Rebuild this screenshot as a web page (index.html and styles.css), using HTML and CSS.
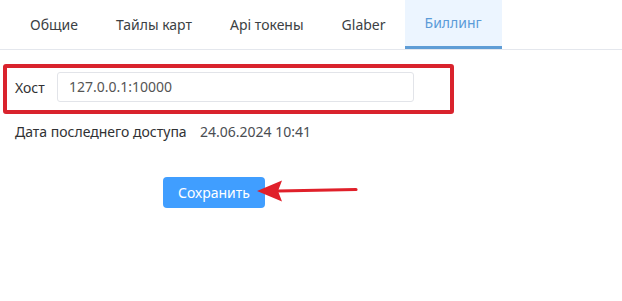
FILE: index.html
```html
<!DOCTYPE html>
<html>
<head>
<meta charset="utf-8">
<link rel="stylesheet" href="styles.css">
</head>
<body>
<div class="page">
  <nav class="tabs">
    <div class="tab">Общие</div>
    <div class="tab">Тайлы карт</div>
    <div class="tab">Api токены</div>
    <div class="tab">Glaber</div>
    <div class="tab active">Биллинг</div>
  </nav>
  <div class="form">
    <div class="row host">
      <label class="label">Хост</label>
      <div class="input">127.0.0.1:10000</div>
      <div class="highlight"></div>
    </div>
    <div class="row info">
      <span class="label">Дата последнего доступа</span>
      <span class="value">24.06.2024 10:41</span>
    </div>
    <div class="actions">
      <button class="btn">Сохранить</button>
      <svg class="arrow" width="104" height="26" viewBox="0 0 104 26">
        <line x1="22" y1="13" x2="100" y2="11.5" stroke="#e0202a" stroke-width="3.2" stroke-linecap="round"/>
        <polygon points="1,13 26,2.5 22,13 26,23.5" fill="#e0202a"/>
      </svg>
    </div>
  </div>
</div>
</body>
</html>
```
FILE: styles.css
```css
* { box-sizing: border-box; }
html, body { margin: 0; padding: 0; background: #fff; }
body {
  font-family: "Noto Sans", "Open Sans", sans-serif;
  font-size: 14px;
  color: #303133;
}
.page { width: 622px; height: 301px; }
.tabs {
  display: flex;
  height: 50px;
  padding-left: 11px;
  border-bottom: 1px solid #e4e7ed;
}
.tab {
  padding: 0 19px;
  height: 49px;
  line-height: 49px;
  color: #3c3f44;
}
.tab.active {
  margin-left: 0;
  padding: 0 20px;
  background: #ecf5ff;
  color: #5b9bd8;
  line-height: 46px;
  border-bottom: 3px solid #5f9dd6;
}
.form { padding: 0 0 0 15px; }
.row { display: flex; align-items: center; position: relative; }
.host { margin-top: 22px; height: 30px; }
.host .label { width: 42px; }
.input {
  width: 357px;
  height: 30px;
  border: 1px solid #e2e4e9;
  border-radius: 3px;
  padding: 0 11px;
  line-height: 28px;
  color: #555;
}
.highlight {
  position: absolute;
  left: -12px;
  top: -8px;
  width: 451px;
  height: 50px;
  border: 4px solid #d9232d;
  border-radius: 3px;
}
.info { margin-top: 19px; height: 20px; }
.info .label { width: 185px; }
.value { color: #4a4d52; }
.actions {
  display: flex;
  align-items: center;
  margin-top: 36px;
  padding-left: 148px;
  position: relative;
}
.btn {
  width: 102px;
  height: 31px;
  border: none;
  border-radius: 4px;
  background: #409eff;
  color: #fff;
  font-family: inherit;
  font-size: 14px;
  padding: 0;
}
.arrow { position: absolute; left: 241px; top: 1px; }
```
